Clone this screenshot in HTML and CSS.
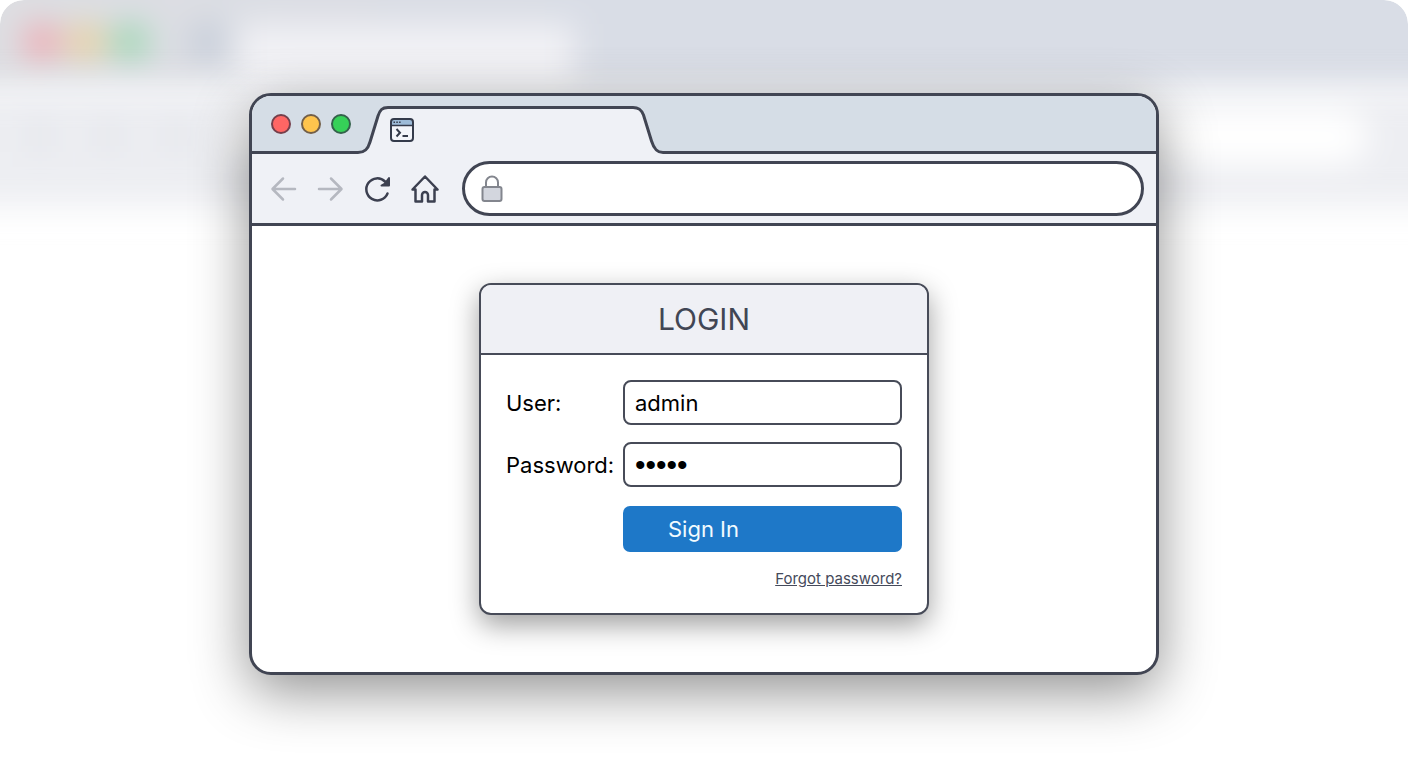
FILE: index.html
```html
<!DOCTYPE html>
<html lang="en">
<head>
    <meta charset="UTF-8">
    <meta name="viewport" content="width=device-width, initial-scale=1.0">
    <title>Login</title>
    <link rel="stylesheet" href="styles.css">
</head>
<body>
    <div class="scene">
        <!-- Blurred backdrop -->
        <div class="backdrop" aria-hidden="true">
            <div class="backdrop-strip">
                <span class="glow glow-red"></span>
                <span class="glow glow-yellow"></span>
                <span class="glow glow-green"></span>
                <span class="glow glow-icon"></span>
                <span class="backdrop-tab"></span>
            </div>
            <div class="backdrop-toolbar">
                <span class="smudge"></span>
                <span class="smudge"></span>
                <span class="smudge"></span>
                <span class="backdrop-address"></span>
            </div>
        </div>

        <div class="browser">
            <div class="tab-strip">
                <div class="lights">
                    <span class="light red"></span>
                    <span class="light yellow"></span>
                    <span class="light green"></span>
                </div>
                <svg class="tab-edge" width="34" height="57" viewBox="0 0 34 57">
                    <path class="tab-fill" d="M0 57V55.5H2C9 55.5 12 52 14 45L22 19C24 13 26 10.5 32 10.5H34V57Z"/>
                    <path class="tab-line" d="M0 55.5H2C9 55.5 12 52 14 45L22 19C24 13 26 10.5 32 10.5H34"/>
                </svg>
                <div class="tab">
                    <svg width="24" height="24" viewBox="0 0 24 24">
                        <rect x="1" y="1" width="22" height="22" rx="3" fill="#f3f5fa"/>
                        <path d="M1 7V4a3 3 0 0 1 3-3h16a3 3 0 0 1 3 3v3Z" fill="#9dbbd8"/>
                        <rect x="1" y="1" width="22" height="22" rx="3" fill="none" stroke="#343b4b" stroke-width="2"/>
                        <path d="M1 7.5H23" stroke="#343b4b" stroke-width="1.5"/>
                        <path d="M3.5 4.3h1.5M6.3 4.3h1.5M9.1 4.3h1.5" stroke="#343b4b" stroke-width="1.5"/>
                        <path d="M6.5 11L10 14.7L6.5 18.5M12.5 18H18" fill="none" stroke="#343b4b" stroke-width="2"/>
                    </svg>
                </div>
                <svg class="tab-edge" width="34" height="57" viewBox="0 0 34 57">
                    <path class="tab-fill" d="M0 57V10.5H1C7 10.5 9.5 13 11.5 18L19.5 44C22 52 25 55.5 31 55.5H34V57Z"/>
                    <path class="tab-line" d="M0 10.5H1C7 10.5 9.5 13 11.5 18L19.5 44C22 52 25 55.5 31 55.5H34"/>
                </svg>
                <div class="strip-rest"></div>
            </div>

            <div class="toolbar">
                <button class="nav-button muted" type="button" aria-label="Back">
                    <svg width="28" height="28" viewBox="0 0 28 28"><path d="M25 14H3M13 3.5L2.5 14L13 24.5"/></svg>
                </button>
                <button class="nav-button muted" type="button" aria-label="Forward">
                    <svg width="28" height="28" viewBox="0 0 28 28"><path d="M2 14H24M14 3.5L24.5 14L14 24.5"/></svg>
                </button>
                <button class="nav-button" type="button" aria-label="Reload">
                    <svg width="28" height="28" viewBox="0 0 28 28">
                        <path d="M23.5 18.5A11 11 0 1 1 21 6.5L23.5 9"/>
                        <path d="M25 3V10.5H17.5L21 8.5Z" fill="currentColor" stroke-width="2"/>
                    </svg>
                </button>
                <button class="nav-button" type="button" aria-label="Home">
                    <svg width="28" height="28" viewBox="0 0 28 28">
                        <path d="M1.5 14.5L14 1.5L26.5 14.5H23.5V26.5H17V20A3 3 0 0 0 11 20V26.5H4.5V14.5Z"/>
                    </svg>
                </button>
                <div class="address">
                    <svg width="22" height="28" viewBox="0 0 22 28">
                        <path d="M5 13V7.5a6 6 0 0 1 12 0V13" fill="none" stroke="#83868e" stroke-width="2"/>
                        <rect x="1.5" y="12" width="19" height="14" rx="2" fill="#d3d6de" stroke="#83868e" stroke-width="2"/>
                    </svg>
                    <input class="address-input" type="text" aria-label="Address">
                </div>
            </div>

            <div class="page">
                <form class="login">
                    <h1>LOGIN</h1>
                    <div class="fields">
                        <label for="user">User:</label>
                        <input id="user" class="input-field" type="text" value="admin">
                        <label for="password">Password:</label>
                        <input id="password" class="input-field" type="password" value="admin">
                        <button class="sign-in" type="button">Sign In</button>
                        <a class="forgot" href="#">Forgot password?</a>
                    </div>
                </form>
            </div>
        </div>
    </div>
</body>
</html>
```
FILE: styles.css
```css
* { box-sizing: border-box; }
body { margin: 0; background: #fff; font-family: Inter, "Liberation Sans", sans-serif; color: #000; }
.scene { position: relative; display: flex; align-items: center; justify-content: center; min-height: 100vh; padding: 40px 24px; overflow: hidden; border-radius: 24px; }

/* Backdrop */
.backdrop { position: absolute; inset: 0; overflow: hidden; border-radius: 24px; }
.backdrop-strip, .backdrop-toolbar { display: flex; margin: 0 -40px; filter: blur(16px); }
.backdrop-strip { align-items: center; height: 132px; margin-top: -40px; padding: 32px 64px 0; background: linear-gradient(90deg, #dddee2, #d9dde6 45%); }
.backdrop-toolbar { align-items: center; gap: 36px; height: 118px; margin-top: -4px; padding: 0 80px 20px 64px; background: #edeef2; }
.glow { width: 36px; height: 36px; margin-right: 8px; border-radius: 50%; }
.glow-red { background: #f1a6ae; }
.glow-yellow { background: #ead09a; }
.glow-green { background: #98d6ad; }
.glow-icon { margin: 0 12px 0 34px; background: #c3cbd8; }
.backdrop-tab { align-self: flex-end; width: 336px; height: 68px; background: #f1f1f5; }
.smudge { width: 32px; height: 32px; background: #e5e7ec; }
.backdrop-address { flex: 1; height: 56px; border-radius: 28px; background: #fff; }

/* Browser window */
.browser { position: relative; width: 100%; max-width: 910px; overflow: hidden; border: 3px solid #414553; border-radius: 22px; background: #fff; box-shadow: 0 16px 56px rgba(0, 0, 0, 0.44); }
.tab-strip { display: flex; height: 58px; padding-top: 1px; background: #d5dde6; }
.lights { display: flex; gap: 10px; width: 104px; padding: 17px 0 0 19px; border-bottom: 3px solid #414553; }
.light { width: 20px; height: 20px; border: 2px solid; border-radius: 50%; }
.red { background: #ff6664; border-color: #753f4b; }
.yellow { background: #ffc44d; border-color: #735f49; }
.green { background: #36d158; border-color: #34624b; }
.tab-edge { display: block; flex: none; }
.tab-fill { fill: #eff1f6; }
.tab-line { fill: none; stroke: #414553; stroke-width: 3; }
.tab { flex: 0 1 242px; height: 48px; margin-top: 9px; border-top: 3px solid #414553; background: #eff1f6; }
.tab svg { display: block; margin-top: 9px; }
.strip-rest { flex: 1; border-bottom: 3px solid #414553; }

.toolbar { display: flex; align-items: center; gap: 19px; height: 72px; padding: 0 12px 0 18px; border-bottom: 3px solid #414553; background: #eff1f6; }
.nav-button { width: 28px; height: 28px; padding: 0; border: 0; background: none; color: #3c4050; }
.nav-button svg { display: block; fill: none; stroke: currentColor; stroke-width: 2.5; stroke-linejoin: round; stroke-linecap: round; }
.nav-button.muted { color: #b5b8c0; }
.address { display: flex; align-items: center; flex: 1; height: 55px; margin-left: 4px; padding: 0 16px; border: 3px solid #414553; border-radius: 28px; background: #fff; }
.address-input { flex: 1; min-width: 0; margin-left: 12px; border: 0; outline: 0; background: none; font: inherit; }

/* Login form */
.page { padding: 57px 24px; }
.login { max-width: 450px; margin: 0 auto; overflow: hidden; border: 2px solid #474b58; border-radius: 12px; background: #fff; box-shadow: 0 10px 28px rgba(0, 0, 0, 0.38); }
.login h1 { margin: 0; padding: 14px 0; border-bottom: 2px solid #474b58; background: #eff0f5; color: #414654; font-size: 30px; font-weight: 400; line-height: 40px; text-align: center; }
.fields { display: grid; grid-template-columns: 105px 1fr; gap: 17px 12px; align-items: center; padding: 25px 25px 24px; font-size: 22px; }
.fields label { white-space: nowrap; }
.input-field { width: 100%; height: 45px; padding: 0 10px; border: 2px solid #474b58; border-radius: 8px; background: #fff; color: #000; font: inherit; }
.input-field[type=password] { font-family: "Liberation Sans", sans-serif; font-size: 30px; }
.sign-in { grid-column: 2; height: 46px; margin-top: 2px; padding: 0 45px; border: 0; border-radius: 7px; background: #1e78c8; color: #f2fbff; font: inherit; text-align: left; }
.forgot { grid-column: 2; justify-self: end; color: #454a5b; font-size: 15px; line-height: 20px; }
```
